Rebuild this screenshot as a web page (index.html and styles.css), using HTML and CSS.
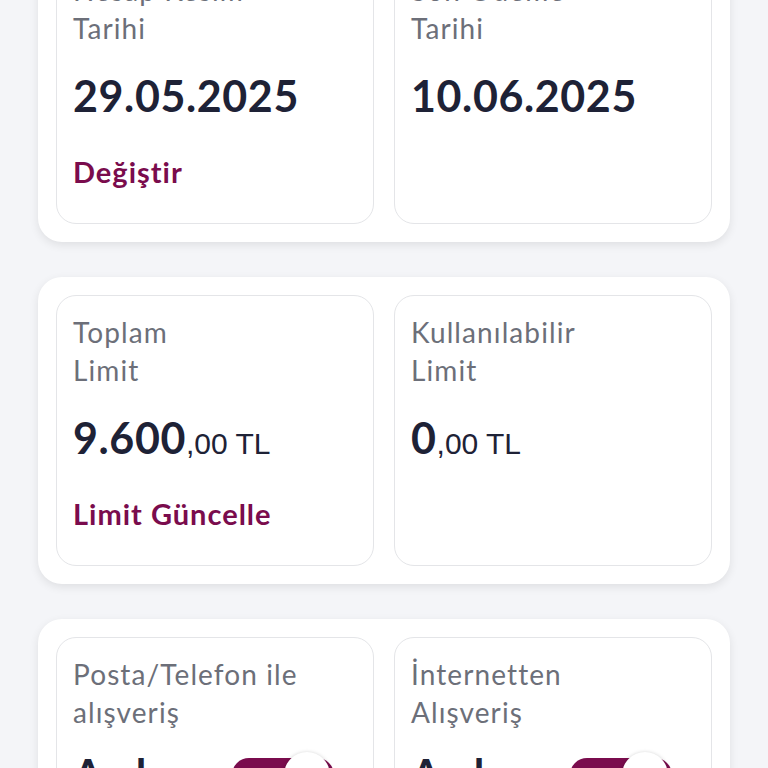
FILE: index.html
```html
<!DOCTYPE html>
<html lang="tr">
<head>
    <meta charset="UTF-8">
    <meta name="viewport" content="width=device-width, initial-scale=1.0">
    <title>Kart Detayları</title>
    <link rel="stylesheet" href="styles.css">
</head>
<body>
    <div class="page">
        <!-- Dates -->
        <div class="panel">
            <div class="tile">
                <p class="tile-label">Hesap Kesim<br>Tarihi</p>
                <p class="tile-value">29.05.2025</p>
                <a href="#" class="tile-link">Değiştir</a>
            </div>
            <div class="tile">
                <p class="tile-label">Son Ödeme<br>Tarihi</p>
                <p class="tile-value">10.06.2025</p>
            </div>
        </div>

        <!-- Limits -->
        <div class="panel">
            <div class="tile">
                <p class="tile-label">Toplam<br>Limit</p>
                <p class="tile-value">9.600<span class="amount-small">,00 TL</span></p>
                <a href="#" class="tile-link">Limit Güncelle</a>
            </div>
            <div class="tile">
                <p class="tile-label">Kullanılabilir<br>Limit</p>
                <p class="tile-value">0<span class="amount-small">,00 TL</span></p>
            </div>
        </div>

        <!-- Shopping permissions -->
        <div class="panel">
            <div class="tile">
                <p class="tile-label">Posta/Telefon ile<br>alışveriş</p>
                <div class="switch-row">
                    <span class="switch-text">Açık</span>
                    <span class="switch on"><span class="knob"></span></span>
                </div>
            </div>
            <div class="tile">
                <p class="tile-label">İnternetten<br>Alışveriş</p>
                <div class="switch-row">
                    <span class="switch-text">Açık</span>
                    <span class="switch on"><span class="knob"></span></span>
                </div>
            </div>
        </div>
    </div>
</body>
</html>
```

FILE: styles.css
```css
/* Basic reset */
* {
    margin: 0;
    padding: 0;
    box-sizing: border-box;
}

body {
    font-family: "Lato", "Noto Sans", sans-serif;
    background-color: #f4f5f8;
    color: #1e2236;
    overflow: hidden;
}

/* Page is scrolled a bit, first panel cut at top */
.page {
    display: flex;
    flex-direction: column;
    gap: 35px;
    padding: 0 38px;
    margin-top: -65px;
}

/* White outer panel */
.panel {
    background-color: #fff;
    border-radius: 24px;
    padding: 18px;
    display: grid;
    grid-template-columns: 1fr 1fr;
    gap: 20px;
    box-shadow: 0 3px 10px rgba(0, 0, 0, 0.09);
}

/* Inner bordered tile */
.tile {
    border: 1.5px solid #e4e5e8;
    border-radius: 20px;
    padding: 17px 16px 0;
    height: 271px;
}

.tile-label {
    font-size: 28px;
    line-height: 38px;
    letter-spacing: 1.1px;
    color: #6c6f79;
}

.tile-value {
    margin-top: 25px;
    height: 48px;
    font-size: 43px;
    font-weight: 700;
    line-height: 48px;
    letter-spacing: 0.6px;
    color: #1e2236;
}

.amount-small {
    font-family: "Liberation Sans", Arial, sans-serif;
    font-size: 30px;
    font-weight: 400;
    line-height: 1;
    letter-spacing: 0;
}

.tile-link {
    display: block;
    margin-top: 35px;
    font-size: 29px;
    font-weight: 700;
    line-height: 34px;
    letter-spacing: 1px;
    color: #7a0c4d;
    text-decoration: none;
}

/* Switch row */
.switch-row {
    margin-top: 20px;
    display: flex;
    align-items: center;
    justify-content: space-between;
    padding-right: 23px;
}

.switch-text {
    font-size: 43px;
    font-weight: 700;
    line-height: 48px;
    letter-spacing: 0.6px;
}

.switch {
    position: relative;
    width: 102px;
    height: 34px;
    border-radius: 17px;
    background-color: #7a0c4d;
}

.switch .knob {
    position: absolute;
    right: 4px;
    top: -6px;
    width: 46px;
    height: 46px;
    border-radius: 50%;
    background-color: #fff;
    box-shadow: 0 1px 4px rgba(0, 0, 0, 0.25);
}
```
